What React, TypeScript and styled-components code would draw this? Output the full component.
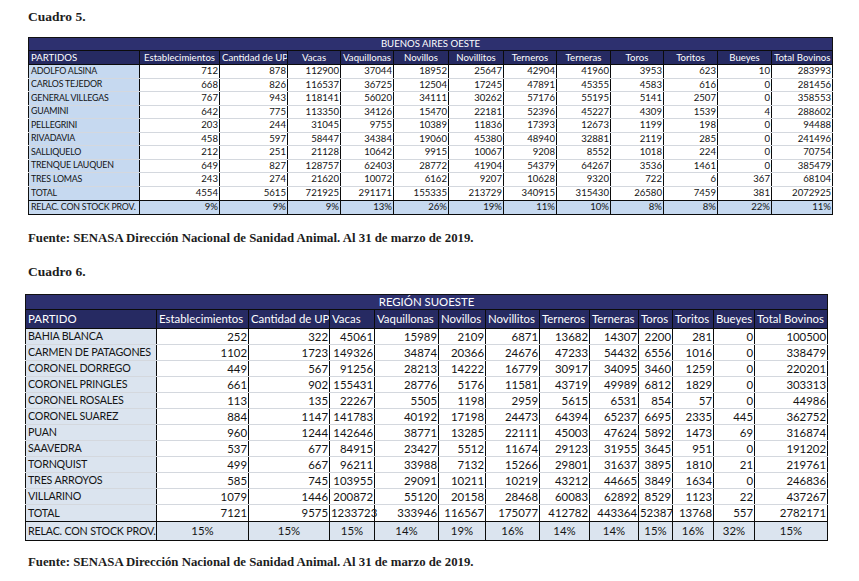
import styled, { createGlobalStyle } from "styled-components";

type Row = [string, ...string[]];

const HEAD = [
  "Establecimientos",
  "Cantidad de UP",
  "Vacas",
  "Vaquillonas",
  "Novillos",
  "Novillitos",
  "Terneros",
  "Terneras",
  "Toros",
  "Toritos",
  "Bueyes",
  "Total Bovinos",
];

const r = (s: string): Row => s.split("|") as Row;

const oeste: Row[] = [
  "ADOLFO ALSINA|712|878|112900|37044|18952|25647|42904|41960|3953|623|10|283993",
  "CARLOS TEJEDOR|668|826|116537|36725|12504|17245|47891|45355|4583|616|0|281456",
  "GENERAL VILLEGAS|767|943|118141|56020|34111|30262|57176|55195|5141|2507|0|358553",
  "GUAMINI|642|775|113350|34126|15470|22181|52396|45227|4309|1539|4|288602",
  "PELLEGRINI|203|244|31045|9755|10389|11836|17393|12673|1199|198|0|94488",
  "RIVADAVIA|458|597|58447|34384|19060|45380|48940|32881|2119|285|0|241496",
  "SALLIQUELO|212|251|21128|10642|9915|10067|9208|8552|1018|224|0|70754",
  "TRENQUE LAUQUEN|649|827|128757|62403|28772|41904|54379|64267|3536|1461|0|385479",
  "TRES LOMAS|243|274|21620|10072|6162|9207|10628|9320|722|6|367|68104",
].map(r);
const oesteTotal = r("TOTAL|4554|5615|721925|291171|155335|213729|340915|315430|26580|7459|381|2072925");
const oesteRel = r("RELAC. CON STOCK PROV.|9%|9%|9%|13%|26%|19%|11%|10%|8%|8%|22%|11%");

const suoeste: Row[] = [
  "BAHIA BLANCA|252|322|45061|15989|2109|6871|13682|14307|2200|281|0|100500",
  "CARMEN DE PATAGONES|1102|1723|149326|34874|20366|24676|47233|54432|6556|1016|0|338479",
  "CORONEL DORREGO|449|567|91256|28213|14222|16779|30917|34095|3460|1259|0|220201",
  "CORONEL PRINGLES|661|902|155431|28776|5176|11581|43719|49989|6812|1829|0|303313",
  "CORONEL ROSALES|113|135|22267|5505|1198|2959|5615|6531|854|57|0|44986",
  "CORONEL SUAREZ|884|1147|141783|40192|17198|24473|64394|65237|6695|2335|445|362752",
  "PUAN|960|1244|142646|38771|13285|22111|45003|47624|5892|1473|69|316874",
  "SAAVEDRA|537|677|84915|23427|5512|11674|29123|31955|3645|951|0|191202",
  "TORNQUIST|499|667|96211|33988|7132|15266|29801|31637|3895|1810|21|219761",
  "TRES ARROYOS|585|745|103955|29091|10211|10219|43212|44665|3849|1634|0|246836",
  "VILLARINO|1079|1446|200872|55120|20158|28468|60083|62892|8529|1123|22|437267",
].map(r);
const suoesteTotal = r("TOTAL|7121|9575|1233723|333946|116567|175077|412782|443364|52387|13768|557|2782171");
const suoesteRel = r("RELAC. CON STOCK PROV.|15%|15%|15%|14%|19%|16%|14%|14%|15%|16%|32%|15%");

const cols5 = [111, 80, 68, 53, 53, 55, 55, 53, 54, 53, 54, 54, 61];
const cols6 = [131, 92, 81, 45, 64, 47, 54, 50, 49, 34, 41, 41, 73];

const GlobalStyle = createGlobalStyle`
  body {
    margin: 0;
    background: #ffffff;
    color: #111111;
  }
`;

const Page = styled.div`
  width: 859px;
  height: 581px;
  overflow: hidden;
  padding-top: 9px;
  box-sizing: border-box;
`;

const Caption = styled.h2<{ $top: number; $left: number }>`
  margin: ${(p) => p.$top}px 0 0 ${(p) => p.$left}px;
  font-family: "Liberation Serif", serif;
  font-weight: 700;
  font-size: 13.5px;
  line-height: 16px;
  color: #1d1d1d;
`;

const Source = styled.p<{ $top: number }>`
  margin: ${(p) => p.$top}px 0 0 28px;
  font-family: "Liberation Serif", serif;
  font-weight: 700;
  font-size: 12.8px;
  line-height: 16px;
  color: #1d1d1d;
`;

const Sheet = styled.table<{ $top: number; $left: number; $size: number }>`
  margin: ${(p) => p.$top}px 0 0 ${(p) => p.$left}px;
  border-collapse: collapse;
  table-layout: fixed;
  font-family: Lato, "Open Sans", sans-serif;
  font-size: ${(p) => p.$size}px;
  color: #141414;
  border: 1.5px solid #111;
`;

const Title = styled.td<{ $h: number }>`
  height: ${(p) => p.$h}px;
  padding: 0;
  background: #2d306f;
  color: #ffffff;
  text-align: center;
  line-height: 1;
`;

const HeadCell = styled.td<{ $h: number; $align: string }>`
  height: ${(p) => p.$h}px;
  padding: 0 2px;
  background: #262a62;
  color: #ffffff;
  text-align: ${(p) => p.$align};
  border: 1.5px solid #0b0b0b;
  white-space: nowrap;
  overflow: hidden;
  line-height: 1;
`;

const NameCell = styled.td<{ $h: number; $bg: string; $shrink: number }>`
  height: ${(p) => p.$h}px;
  padding: 0 1px 0 2px;
  background: ${(p) => p.$bg};
  border-right: 1.5px solid #0b0b0b;
  border-bottom: 1px solid #d4d8de;
  white-space: nowrap;
  overflow: hidden;
  font-size: ${(p) => p.$shrink}em;
  letter-spacing: -0.2px;
  line-height: 1;
`;

const NumCell = styled.td<{ $h: number; $bg: string; $align: string }>`
  height: ${(p) => p.$h}px;
  padding: 0 1px;
  background: ${(p) => p.$bg};
  text-align: ${(p) => p.$align};
  border-right: 1.5px solid #0b0b0b;
  border-bottom: 1px solid #d4d8de;
  white-space: nowrap;
  line-height: 1;
`;

const FootRow = styled.tr`
  td {
    border-top: 1.5px solid #0b0b0b;
    border-bottom: 1.5px solid #0b0b0b;
  }
`;

type SheetProps = {
  top: number;
  left: number;
  size: number;
  shrink: number;
  cols: number[];
  title: string;
  first: string;
  headAlign: string;
  nameBg: string;
  relBg: string;
  relAlign: string;
  h: { title: number; head: number; row: number; total: number; rel: number };
  rows: Row[];
  total: Row;
  rel: Row;
};

function DataSheet(p: SheetProps) {
  return (
    <Sheet $top={p.top} $left={p.left} $size={p.size} style={{ width: p.cols.reduce((a, b) => a + b, 0) }}>
      <colgroup>
        {p.cols.map((w, i) => (
          <col key={i} style={{ width: w }} />
        ))}
      </colgroup>
      <tbody>
        <tr>
          <Title colSpan={13} $h={p.h.title}>
            {p.title}
          </Title>
        </tr>
        <tr>
          <HeadCell $h={p.h.head} $align="left">
            {p.first}
          </HeadCell>
          {HEAD.map((c) => (
            <HeadCell key={c} $h={p.h.head} $align={p.headAlign}>
              {c}
            </HeadCell>
          ))}
        </tr>
        {p.rows.map(([name, ...vals]) => (
          <tr key={name}>
            <NameCell $h={p.h.row} $bg={p.nameBg} $shrink={p.shrink}>
              {name}
            </NameCell>
            {vals.map((v, i) => (
              <NumCell key={i} $h={p.h.row} $bg="#ffffff" $align="right">
                {v}
              </NumCell>
            ))}
          </tr>
        ))}
        <FootRow>
          <NameCell $h={p.h.total} $bg={p.nameBg} $shrink={p.shrink}>
            {p.total[0]}
          </NameCell>
          {p.total.slice(1).map((v, i) => (
            <NumCell key={i} $h={p.h.total} $bg="#ffffff" $align="right">
              {v}
            </NumCell>
          ))}
        </FootRow>
        <FootRow>
          <NameCell $h={p.h.rel} $bg={p.relBg} $shrink={p.shrink}>
            {p.rel[0]}
          </NameCell>
          {p.rel.slice(1).map((v, i) => (
            <NumCell key={i} $h={p.h.rel} $bg={p.relBg} $align={p.relAlign}>
              {v}
            </NumCell>
          ))}
        </FootRow>
      </tbody>
    </Sheet>
  );
}

export default function App() {
  return (
    <>
      <GlobalStyle />
      <Page>
        <Caption $top={0} $left={28}>
          Cuadro 5.
        </Caption>
        <DataSheet
          top={12}
          left={28}
          size={9.6}
          shrink={0.92}
          cols={cols5}
          title="BUENOS AIRES OESTE"
          first="PARTIDOS"
          headAlign="center"
          nameBg="#c6d9f0"
          relBg="#c6d9f0"
          relAlign="right"
          h={{ title: 12, head: 13, row: 12.5, total: 13, rel: 13 }}
          rows={oeste}
          total={oesteTotal}
          rel={oesteRel}
        />
        <Source $top={15}>Fuente: SENASA Dirección Nacional de Sanidad Animal. Al 31 de marzo de 2019.</Source>
        <Caption $top={18} $left={28}>
          Cuadro 6.
        </Caption>
        <DataSheet
          top={14}
          left={25}
          size={11.4}
          shrink={0.94}
          cols={cols6}
          title="REGIÓN SUOESTE"
          first="PARTIDO"
          headAlign="left"
          nameBg="#dbe4ef"
          relBg="#dbe4ef"
          relAlign="center"
          h={{ title: 14.5, head: 18, row: 15, total: 16, rel: 18 }}
          rows={suoeste}
          total={suoesteTotal}
          rel={suoesteRel}
        />
        <Source $top={13}>Fuente: SENASA Dirección Nacional de Sanidad Animal. Al 31 de marzo de 2019.</Source>
      </Page>
    </>
  );
}
